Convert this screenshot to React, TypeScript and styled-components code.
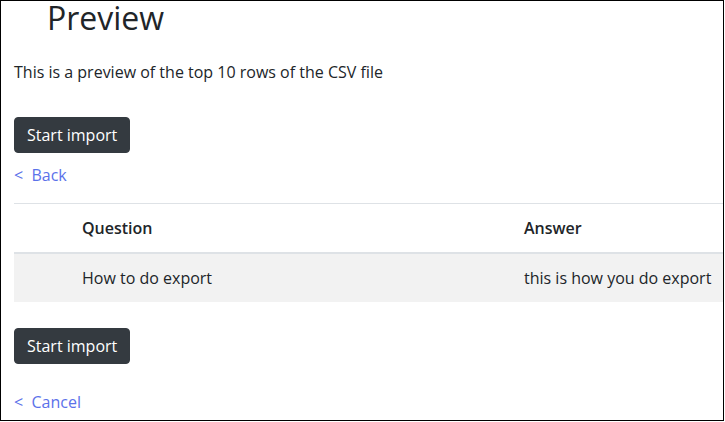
import React from "react";
import styled, { createGlobalStyle } from "styled-components";

const Global = createGlobalStyle`
  html, body { margin: 0; padding: 0; background: #fff; }
  body { font-family: "Open Sans", "Noto Sans", sans-serif; color: #212529; }
  * { box-sizing: border-box; }
`;

const Frame = styled.div`
  width: 724px;
  height: 421px;
  border: 1px solid #000;
  overflow: hidden;
  padding: 0 0 0 13px;
`;

const Title = styled.h1`
  margin: 0;
  padding-left: 33px;
  font-size: 32px;
  font-weight: 400;
  line-height: 34px;
  color: #212529;
`;

const Lead = styled.p`
  margin: 25px 0 0 0;
  font-size: 16px;
  line-height: 24px;
`;

const DarkButton = styled.button<{ $top: number }>`
  display: block;
  margin-top: ${(p) => p.$top}px;
  height: 36px;
  padding: 0 12px;
  border: 1px solid #343a40;
  border-radius: 4px;
  background: #343a40;
  color: #fff;
  font-family: inherit;
  font-size: 16px;
  line-height: 22px;
  cursor: pointer;
`;

const BackLink = styled.a<{ $top: number }>`
  display: block;
  margin-top: ${(p) => p.$top}px;
  font-size: 16px;
  line-height: 24px;
  color: #5b72ea;
  text-decoration: none;
  width: max-content;
`;

const Table = styled.table`
  margin-top: 16px;
  border-collapse: collapse;
  width: 712px;
  table-layout: fixed;
  font-size: 16px;
  line-height: 24px;
`;

const Th = styled.th<{ $w?: number }>`
  width: ${(p) => (p.$w ? `${p.$w}px` : "auto")};
  padding: 12px;
  text-align: left;
  font-weight: 600;
  border-top: 1px solid #dee2e6;
  border-bottom: 2px solid #dee2e6;
  white-space: nowrap;
`;

const Row = styled.tr`
  background: #f2f2f2;
`;

const Td = styled.td`
  padding: 12px;
  border-top: 1px solid #e6e6e6;
  white-space: nowrap;
`;

export default function App() {
  return (
    <>
      <Global />
      <Frame>
        <Title>Preview</Title>
        <Lead>This is a preview of the top 10 rows of the CSV file</Lead>
        <DarkButton $top={33}>Start import</DarkButton>
        <BackLink href="#" $top={10}>&lt;&nbsp; Back</BackLink>
        <Table>
          <thead>
            <tr>
              <Th $w={56}></Th>
              <Th $w={442}>Question</Th>
              <Th>Answer</Th>
            </tr>
          </thead>
          <tbody>
            <Row>
              <Td></Td>
              <Td>How to do export</Td>
              <Td>this is how you do export</Td>
            </Row>
          </tbody>
        </Table>
        <DarkButton $top={26}>Start import</DarkButton>
        <BackLink href="#" $top={26}>&lt;&nbsp; Cancel</BackLink>
      </Frame>
    </>
  );
}
